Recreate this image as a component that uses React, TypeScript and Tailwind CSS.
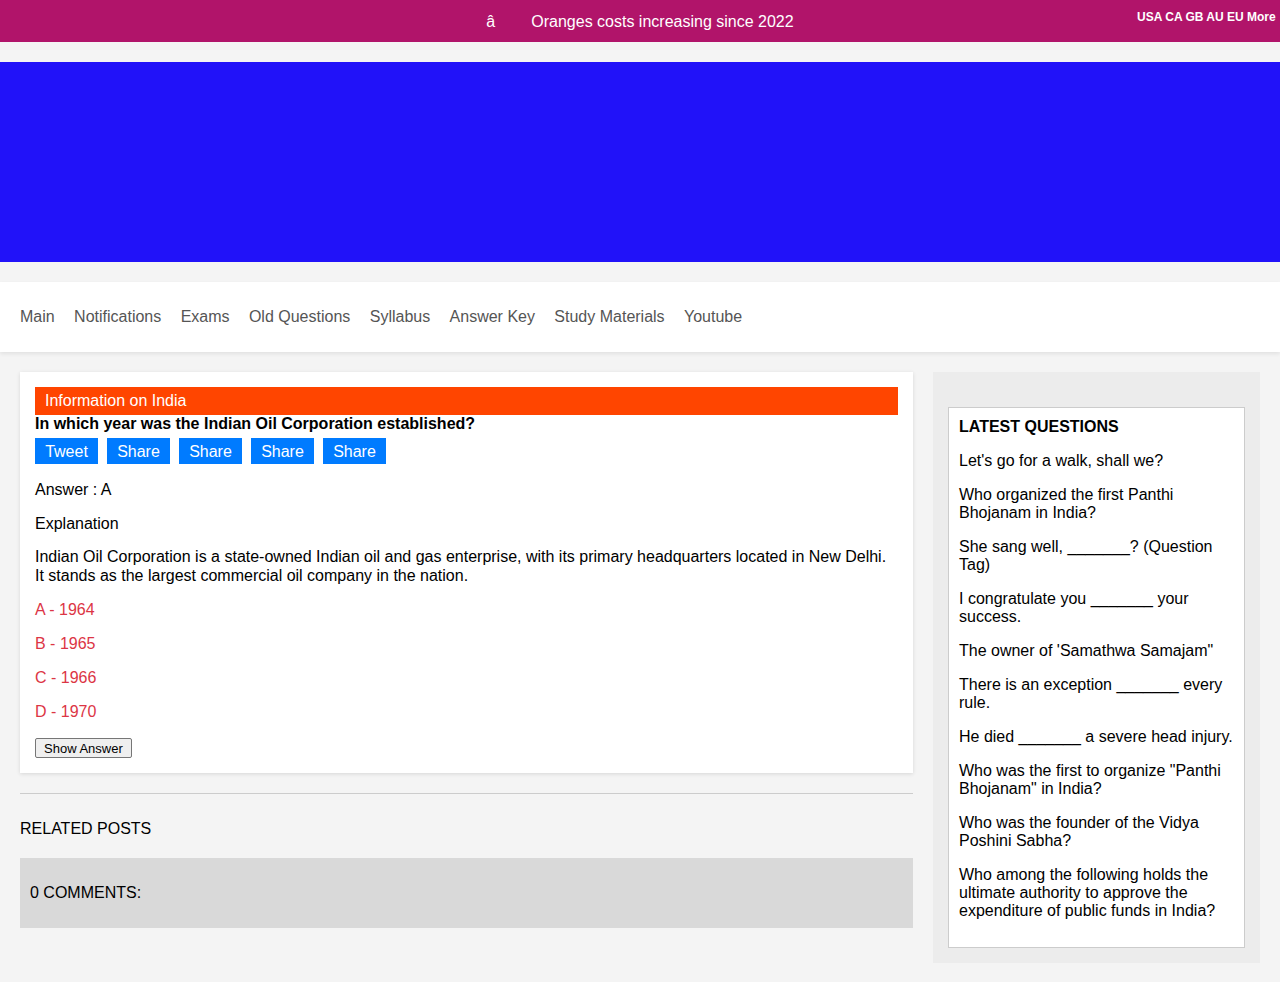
import React from "react";

const questions = [
  "Let's go for a walk, shall we?",
  "Who organized the first Panthi Bhojanam in India?",
  "She sang well, _______? (Question Tag)",
  "I congratulate you _______ your success.",
  "The owner of 'Samathwa Samajam\"",
  "There is an exception _______ every rule.",
  "He died _______ a severe head injury.",
  "Who was the first to organize \"Panthi Bhojanam\" in India?",
  "Who was the founder of the Vidya Poshini Sabha?",
  "Who among the following holds the ultimate authority to approve the expenditure of public funds in India?",
];

export default function App() {
  return (
    <div
      className="min-h-[982px] bg-[#f4f4f4] text-black text-[16px] leading-[18px]"
      style={{ fontFamily: '"Liberation Sans", Arial, sans-serif' }}
    >
      {/* Top bar */}
      <div className="relative h-[42px] bg-[#b1146a] text-white flex items-center justify-center overflow-hidden pt-[2px]">
        <div className="flex items-center gap-[36px]">
          <span>â</span>
          <span>Oranges costs increasing since 2022</span>
        </div>
        <div className="absolute left-[1137px] top-[10px] text-[12px] leading-[14px] font-bold whitespace-nowrap">
          USA CA GB AU EU More
        </div>
      </div>

      <div className="h-[20px]" />
      <div className="h-[200px] bg-[#2112f9]" />
      <div className="h-[20px]" />

      {/* Nav */}
      <nav className="h-[70px] bg-white shadow-[0_2px_4px_rgba(0,0,0,0.08)] flex items-center px-[20px] gap-[19.4px] text-[#555]">
        {["Main", "Notifications", "Exams", "Old Questions", "Syllabus", "Answer Key", "Study Materials", "Youtube"].map((n) => (
          <span key={n}>{n}</span>
        ))}
      </nav>

      <div className="flex gap-[20px] px-[20px] pt-[20px] pb-[20px]">
        {/* Main column */}
        <div className="w-[893px]">
          <div className="bg-white p-[15px] shadow-[0_1px_4px_rgba(0,0,0,0.12)]">
            <div className="bg-[#ff4500] text-white h-[28px] flex items-center pl-[10px]">Information on India</div>
            <div className="font-bold">In which year was the Indian Oil Corporation established?</div>
            <div className="flex gap-[9px] mt-[5px]">
              {["Tweet", "Share", "Share", "Share", "Share"].map((b, i) => (
                <span key={i} className="bg-[#007bff] text-white h-[26px] w-[63px] pt-[1px] flex items-center justify-center">{b}</span>
              ))}
            </div>
            <p className="mt-[17px]">Answer : A</p>
            <p className="mt-[16px]">Explanation</p>
            <p className="mt-[14px] pr-[10px] leading-[19px]">
              Indian Oil Corporation is a state-owned Indian oil and gas enterprise, with its primary headquarters located in New Delhi. It stands as the largest commercial oil company in the nation.
            </p>
            {["A - 1964", "B - 1965", "C - 1966", "D - 1970"].map((o) => (
              <p key={o} className="mt-[16px] text-[#dc3545]">{o}</p>
            ))}
            <button className="block mt-[17px] text-[13px] leading-[15px] px-[8px] pt-[2px] pb-[1px] bg-[#efefef] border border-[#767676] rounded-[2px] text-black">
              Show Answer
            </button>
          </div>
          <div className="mt-[20px] border-t border-[#cccccc]" />
          <div className="mt-[26px]">RELATED POSTS</div>
          <div className="mt-[20px] h-[70px] bg-[#d9d9d9] flex items-center px-[10px]">0 COMMENTS:</div>
        </div>

        {/* Sidebar */}
        <aside className="w-[327px] bg-[#ececec] px-[15px] pt-[35px] pb-[15px] self-start">
          <div className="bg-white border border-[#cccccc] px-[10px] pt-[10px] pb-[27px]">
            <div className="font-bold">LATEST QUESTIONS</div>
            {questions.map((q, i) => (
              <p key={i} className="mt-[16px]">{q}</p>
            ))}
          </div>
        </aside>
      </div>
    </div>
  );
}
